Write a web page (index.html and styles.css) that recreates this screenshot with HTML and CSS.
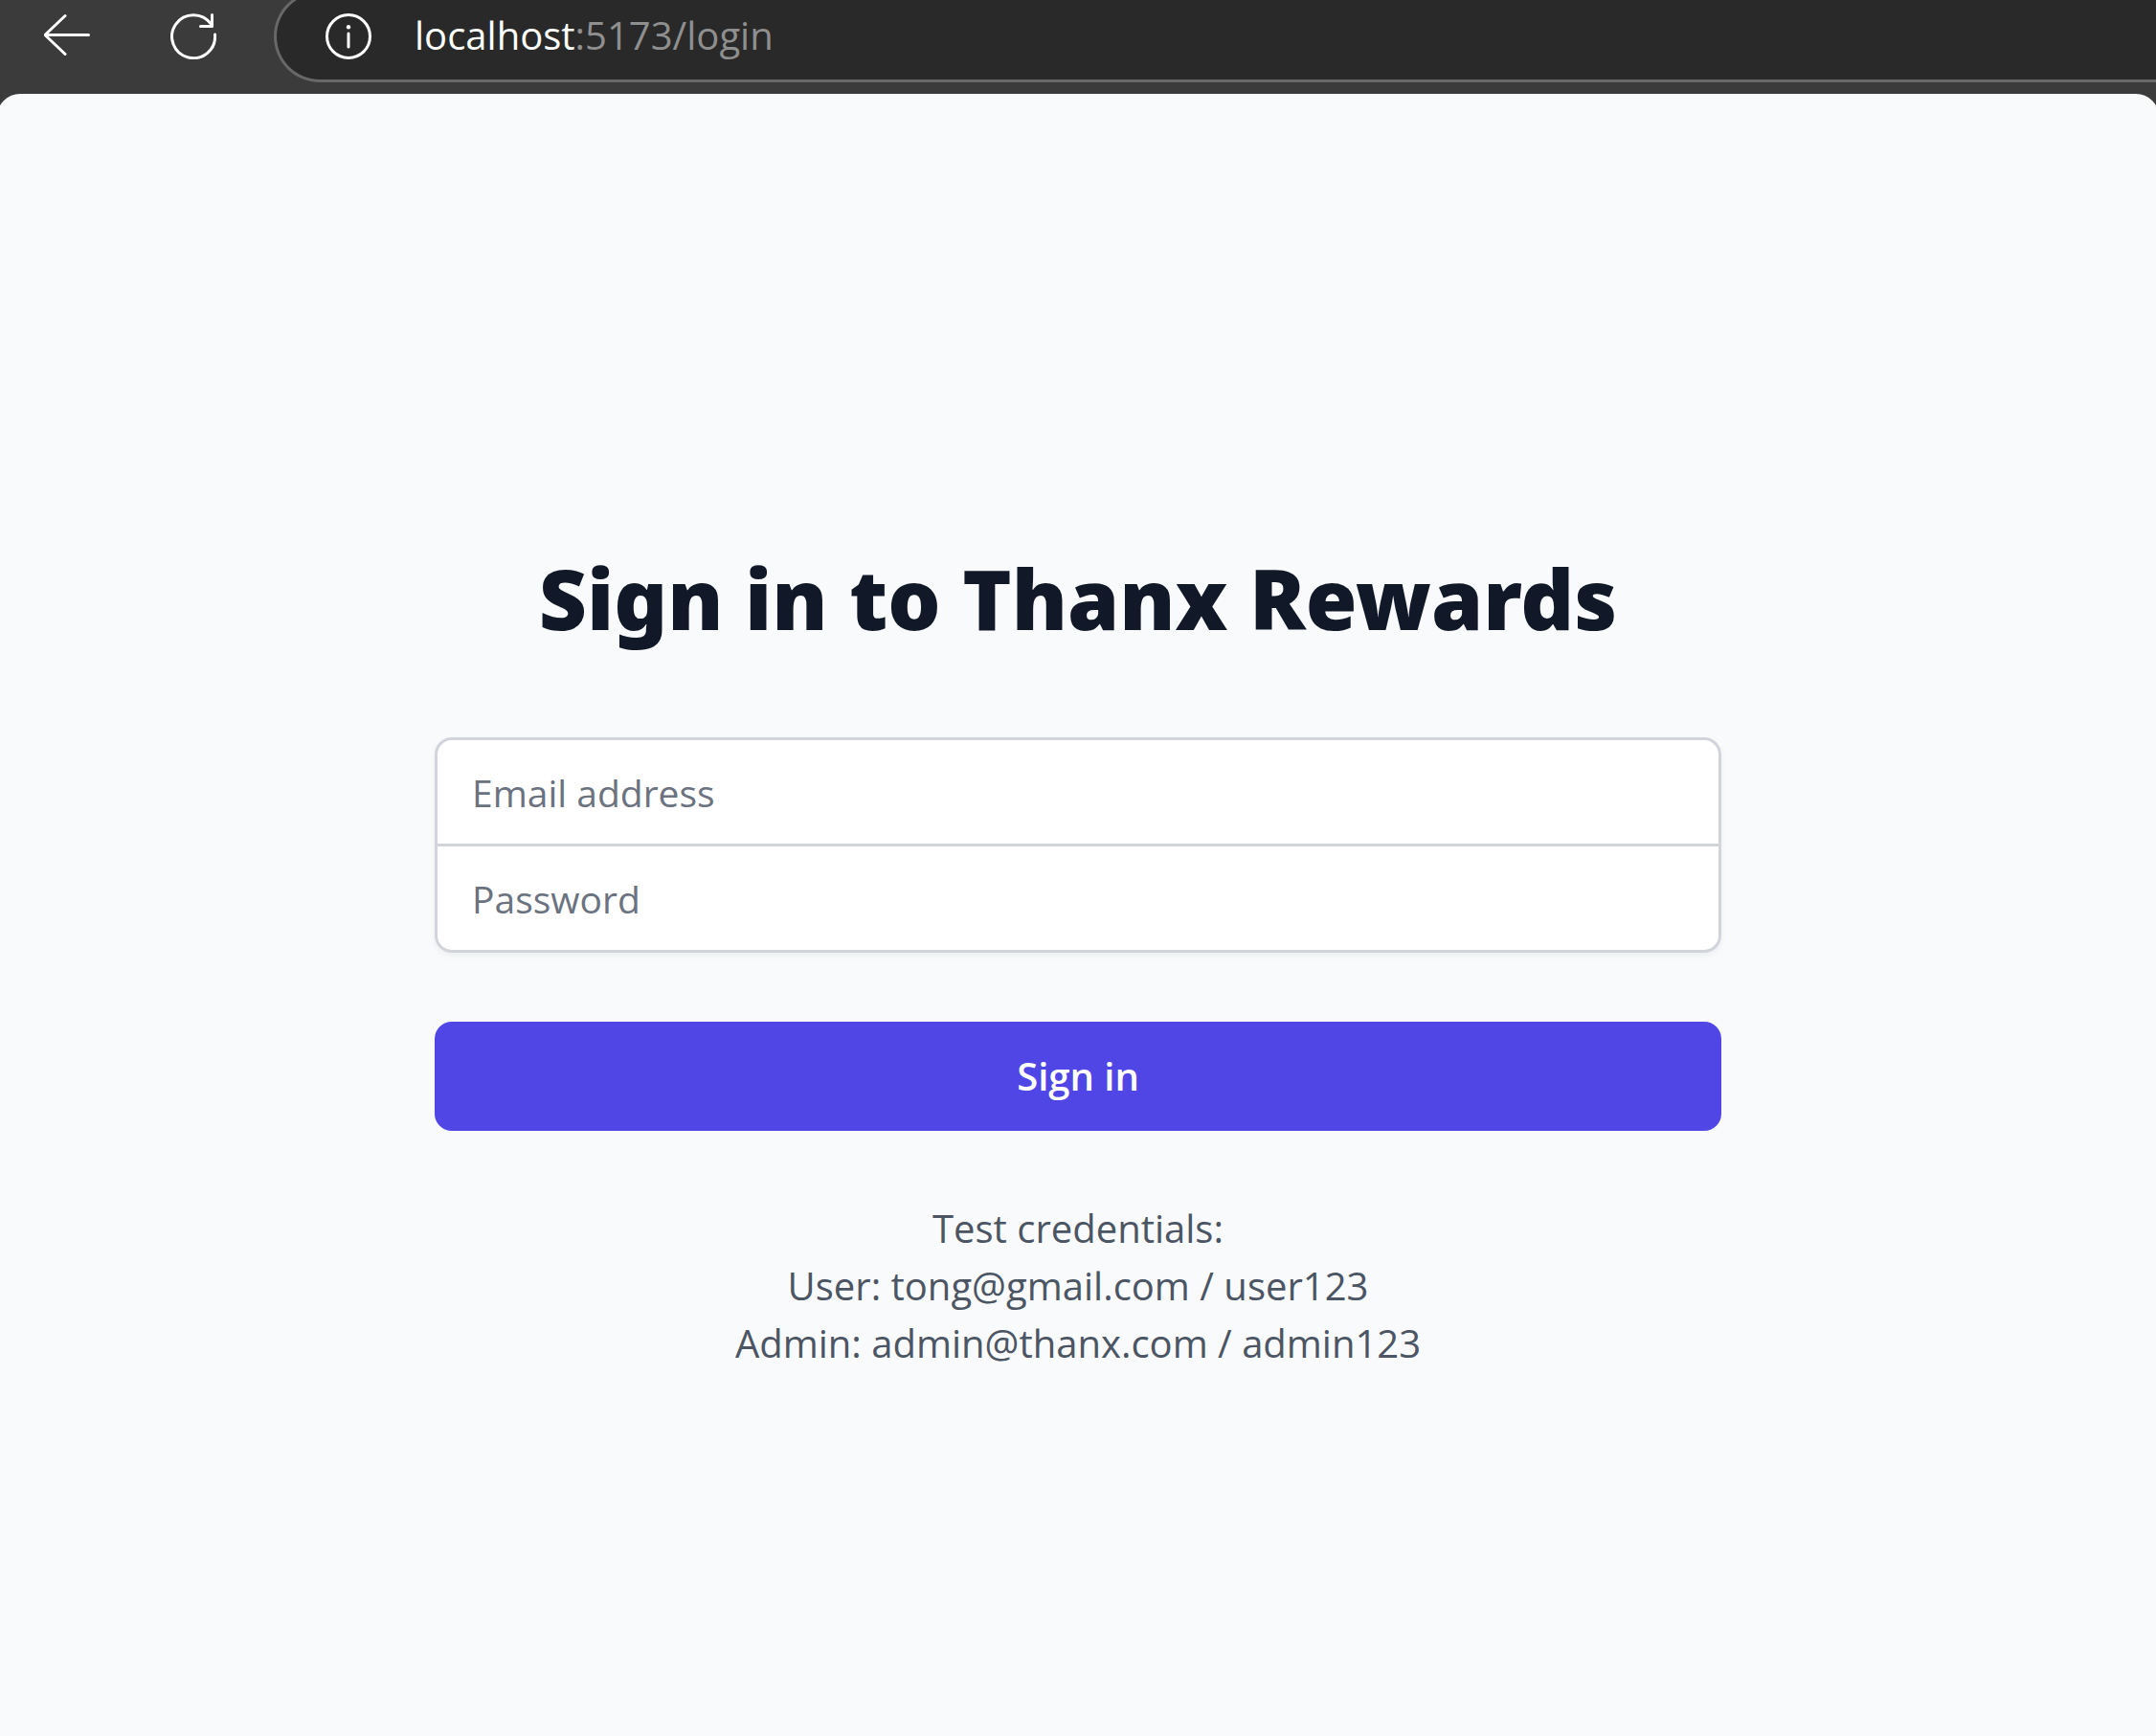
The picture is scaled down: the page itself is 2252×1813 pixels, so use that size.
FILE: index.html
```html
<!DOCTYPE html>
<html lang="en">
<head>
  <meta charset="utf-8">
  <meta name="viewport" content="width=device-width, initial-scale=1">
  <title>Sign in to Thanx Rewards</title>
  <link rel="stylesheet" href="styles.css">
</head>
<body>
  <header class="toolbar">
    <nav class="toolbar-actions">
      <button class="icon-button" type="button" aria-label="Back">
        <svg class="icon" viewBox="0 0 48 48"><path d="M46.500 22.500H1.500M22 2.500L1 22.500L22 42.500"/></svg>
      </button>
      <button class="icon-button" type="button" aria-label="Refresh">
        <svg class="icon" viewBox="0 0 48 48"><path d="M46.500 22A22.500 22.500 0 1 1 42.500 11.200M43.500 1.500V13.500H31.500"/></svg>
      </button>
    </nav>
    <div class="address-bar">
      <button class="icon-button" type="button" aria-label="Site information">
        <svg class="icon" viewBox="0 0 48 48"><circle cx="24" cy="24" r="22.500"/><path d="M24 21V35"/><circle class="icon-dot" cx="24" cy="14.300" r="2.200"/></svg>
      </button>
      <div class="address"><span class="address-host">localhost</span>:5173/login</div>
    </div>
  </header>
  <main class="page">
    <div class="login">
      <h1 class="login-title">Sign in to Thanx Rewards</h1>
      <form class="login-form">
        <div class="fields">
          <input class="field" name="email" type="email" aria-label="Email address" placeholder="Email address" autocomplete="email">
          <input class="field" name="password" type="password" aria-label="Password" placeholder="Password" autocomplete="current-password">
        </div>
        <button class="submit" type="submit">Sign in</button>
        <div class="credentials">
          <p>Test credentials:</p>
          <p>User: tong@gmail.com / user123</p>
          <p>Admin: admin@thanx.com / admin123</p>
        </div>
      </form>
    </div>
  </main>
</body>
</html>
```

FILE: styles.css
```css
* {
  box-sizing: border-box;
}

body {
  margin: 0;
  min-height: 100vh;
  display: flex;
  flex-direction: column;
  overflow-x: clip;
  background: #3b3b3b;
  font-family: "Open Sans", "Noto Sans", sans-serif;
  font-size: 40px;
  line-height: 60px;
}

h1,
p {
  margin: 0;
}

.toolbar {
  display: flex;
  align-items: flex-start;
  gap: 60px;
  padding-left: 46px;
  padding-bottom: 12px;
  overflow: hidden;
}

.toolbar-actions {
  display: flex;
  gap: 84px;
  padding-top: 14px;
}

.icon-button {
  display: flex;
  padding: 0;
  border: 0;
  background: none;
  color: #fff;
}

.icon {
  width: 48px;
  height: 48px;
  fill: none;
  stroke: currentColor;
  stroke-width: 3;
  stroke-linecap: round;
  stroke-linejoin: round;
}

.icon-dot {
  fill: currentColor;
  stroke: none;
}

.address-bar {
  flex: 1;
  display: flex;
  align-items: center;
  gap: 45px;
  height: 96px;
  margin-top: -10px;
  padding-left: 51px;
  border: 3px solid #686868;
  border-right: 0;
  border-radius: 48px 0 0 48px;
  background: #292929;
}

.address {
  padding-bottom: 2px;
  color: #8f8f8f;
}

.address-host {
  color: #fff;
}

.page {
  flex: 1;
  display: flex;
  align-items: center;
  justify-content: center;
  margin: 0 -3px;
  padding: 140px 48px 48px;
  border-radius: 24px 24px 0 0;
  background: #f9fafc;
}

.login {
  width: 100%;
  max-width: 1344px;
  display: flex;
  flex-direction: column;
  gap: 92px;
}

.login-title {
  color: #111827;
  font-family: "Noto Sans", "Open Sans", sans-serif;
  font-size: 87px;
  font-weight: 900;
  line-height: 108px;
  text-align: center;
}

.login-form {
  display: flex;
  flex-direction: column;
  gap: 72px;
}

.fields {
  display: flex;
  flex-direction: column;
  border: 3px solid #d1d5db;
  border-radius: 18px;
  background: #fff;
  box-shadow: 0 3px 6px rgba(0, 0, 0, 0.05);
}

.field {
  width: 100%;
  height: 108px;
  padding: 0 36px;
  border: 0;
  border-radius: 18px 18px 0 0;
  background: none;
  color: #111827;
  font: inherit;
  font-size: 39px;
}

.field + .field {
  height: 111px;
  border-top: 3px solid #d1d5db;
  border-radius: 0 0 18px 18px;
}

.field::placeholder {
  color: #6b7280;
  opacity: 1;
}

.submit {
  height: 114px;
  border: 0;
  border-radius: 18px;
  background: #4f46e5;
  color: #fff;
  font: inherit;
  font-weight: 600;
}

.credentials {
  color: #4b5563;
  text-align: center;
}
```
